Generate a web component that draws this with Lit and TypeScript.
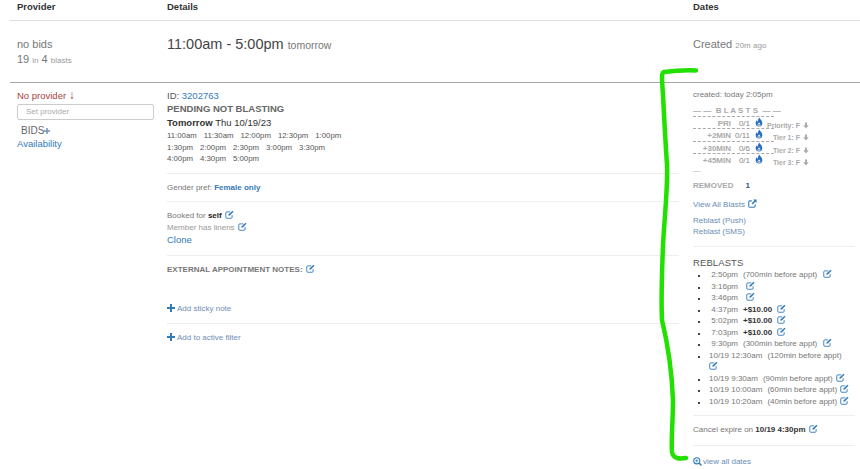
import { LitElement, html, css, svg } from "lit";
import { customElement } from "lit/decorators.js";

const edit = html`<svg class="ic" viewBox="0 0 12 12" width="9" height="9" fill="none" stroke="#337ab7"><path d="M9.5 6.8V9.6a1.4 1.4 0 0 1-1.4 1.4H2.4A1.4 1.4 0 0 1 1 9.6V3.9a1.4 1.4 0 0 1 1.4-1.4H7" stroke-width="1.2"/><path d="M4.6 7.7l.4-1.9L10 .9l1.3 1.3L6.5 7.3z" fill="#337ab7" stroke="none"/></svg>`;
const ext = html`<svg class="ic" viewBox="0 0 12 12" width="9" height="9" fill="none" stroke="#337ab7"><path d="M9.5 7v2.6A1.4 1.4 0 0 1 8.1 11H2.4A1.4 1.4 0 0 1 1 9.6V3.9a1.4 1.4 0 0 1 1.4-1.4H5" stroke-width="1.4"/><path d="M7 .8h4.4v4.4L9.800 3.700 6.300 7.200 4.900 5.800l3.500-3.500z" fill="#337ab7" stroke="none"/></svg>`;
const flame = html`<svg class="fl" viewBox="0 0 10 12" width="8" height="10"><path d="M5.400.4c.4 1.900 3.800 3.600 3.800 7A4.200 4.200 0 0 1 5 11.600 4.200 4.200 0 0 1 .8 7.400c0-1.500.7-2.700 1.500-3.500.1 1 .5 1.600 1.100 1.900C3.400 3.800 4.200 1.800 5.400.4z" fill="#2a6fc0"/><path d="M5 6.200c.3 1 1.800 1.700 1.800 3.100a1.800 1.800 0 0 1-3.600 0c0-1.300 1.500-1.900 1.800-3.100z" fill="#fff"/><path d="M5 8.300c.2.500.8.800.8 1.300a.8.800 0 0 1-1.600 0c0-.5.6-.8.800-1.300z" fill="#1d3f73"/></svg>`;
const arrowDown = html`<svg class="dn" viewBox="0 0 8 9" width="6" height="7"><path d="M2.700.5h2.600v3.700H7.700L4 8.500.3 4.200h2.400z" fill="#a8adb3"/></svg>`;
const plus = html`<svg class="pl" viewBox="0 0 8 8" width="8" height="8"><path d="M3 0h2v3h3v2H5v3H3V5H0V3h3z" fill="#337ab7"/></svg>`;
const plusLight = html`<svg class="pl2" viewBox="0 0 8 8" width="6" height="6"><path d="M3 0h2v3h3v2H5v3H3V5H0V3h3z" fill="#6f93b8"/></svg>`;

const blasts = [
  ["PRI", "0/1", "Priority: F"],
  ["+2MIN", "0/11", "Tier 1: F"],
  ["+30MIN", "0/6", "Tier 2: F"],
  ["+45MIN", "0/1", "Tier 3: F"],
];
const reblasts: [string, string, boolean][] = [
  ["2:50pm", "(700min before appt)", false],
  ["3:16pm", "", false],
  ["3:46pm", "", false],
  ["4:37pm", "+$10.00", true],
  ["5:02pm", "+$10.00", true],
  ["7:03pm", "+$10.00", true],
  ["9:30pm", "(300min before appt)", false],
];
const reblastsLong = [
  ["10/19 9:30am", "(90min before appt)"],
  ["10/19 10:00am", "(60min before appt)"],
  ["10/19 10:20am", "(40min before appt)"],
];

@customElement("app-root")
export class AppRoot extends LitElement {
  static styles = css`
    :host { display: block; position: relative; width: 860px; height: 469px; overflow: hidden; background: #fff; font-family: "Liberation Sans", Arial, sans-serif; font-size: 9px; color: #666; }
    .row { display: grid; grid-template-columns: 150px 526px 1fr; margin-left: 10px; padding-left: 7px; }
    .head { height: 19px; padding-top: 1px; border-bottom: 1px solid #ddd; font-size: 9.500px; font-weight: bold; color: #333; line-height: 11px; }
    .summary { height: 61px; border-bottom: 1px solid #a6a6a6; }
    .summary > div { padding-top: 17px; }
    .big { font-size: 11px; line-height: 13px; color: #777; }
    .sub { font-size: 11px; line-height: 17px; color: #777; display: block; }
    .sub small { font-size: 8px; color: #999; }
    .time { font-size: 14.500px; line-height: 13px; color: #444; }
    .time small { font-size: 10.500px; color: #777; }
    .created { font-size: 11px; line-height: 13px; color: #777; }
    .created small { font-size: 8px; color: #999; }
    a { color: #337ab7; text-decoration: none; }
    .ic { vertical-align: -1px; margin-left: 1px; }
    .p1 { padding-top: 6px; }
    .noprov { font-size: 9.500px; line-height: 13px; height: 13px; color: #a94442; }
    .noprov span { font-size: 12px; line-height: 0; }
    .sel { margin-top: 2px; box-sizing: border-box; width: 137px; height: 16px; border: 1px solid #ccc; border-radius: 2px; padding-left: 8px; font-size: 8px; line-height: 14px; color: #aaa; }
    .bids { margin: 4px 0 0 4px; font-size: 10px; line-height: 13px; color: #666; display: flex; align-items: center; }
    .avail { font-size: 9.500px; line-height: 14px; display: block; }
    .d1 { width: 512px; padding-top: 6px; }
    .id { font-size: 9.500px; line-height: 13px; color: #555; }
    .pend { font-size: 9.500px; font-weight: bold; line-height: 14px; color: #666; }
    .tom { font-size: 9.500px; line-height: 13px; color: #333; }
    .tom b { font-weight: bold; }
    .times { font-size: 7.800px; line-height: 11.500px; color: #555; margin-top: 1px; }
    .times div { display: flex; gap: 7px; }
    .sec { border-top: 1px solid #eee; }
    .s1 { margin-top: 8px; padding-top: 8px; font-size: 8px; line-height: 11px; color: #777; height: 28px; box-sizing: border-box; }
    .s1 b { color: #337ab7; }
    .s2 { padding-top: 8px; height: 54px; box-sizing: border-box; font-size: 8px; line-height: 12px; color: #777; }
    .s2 b { color: #222; }
    .s2 .m { color: #999; }
    .s2 .clone { display: block; font-size: 9.500px; line-height: 13px; margin-top: -1px; }
    .s3 { padding-top: 8px; height: 48px; box-sizing: border-box; font-size: 8px; font-weight: bold; line-height: 11px; color: #777; }
    .add { display: flex; align-items: center; gap: 2px; font-size: 8px; line-height: 11px; color: #6f8db5; }
    .s4 { height: 11px; padding-bottom: 9px; }
    .s5 { padding-top: 8px; }
    .d2 { padding-top: 6px; font-size: 8px; line-height: 11px; width: 162px; }
    .cr { color: #777; }
    .bh { color: #aaa; font-weight: bold; margin-top: 5px; white-space: pre; }
    .br { display: flex; height: 12.300px; line-height: 13px; position: relative; }
    .bc { width: 81px; box-sizing: border-box; border-top: 1px dashed #aaa; display: flex; height: 12.300px; }
    .bl { width: 38px; text-align: right; color: #aaa; font-weight: bold; }
    .bn { width: 22px; text-align: right; padding-right: 3px; box-sizing: border-box; color: #888; }
    .bf { flex: 1; padding-left: 2px; }
    .fl { vertical-align: -1px; }
    .bs { position: absolute; left: 70px; width: 46px; top: 3px; text-align: right; color: #aaa; font-size: 7px; font-weight: bold; white-space: nowrap; }
    .dn { vertical-align: -1px; margin-left: 1px; }
    .dash { color: #bbb; line-height: 10px; height: 7px; margin-top: 1px; }
    .rem { color: #aaa; font-weight: bold; margin-top: 7px; display: flex; gap: 12px; }
    .rem span { color: #2b5a86; }
    .lnk { color: #6a8db5; display: block; }
    .va { margin-top: 8px; }
    .rp { margin-top: 5px; }
    .hr { border-top: 1px solid #eee; }
    .hr1 { margin-top: 9px; }
    .rh { font-size: 9.500px; line-height: 13px; color: #555; margin-top: 9px; letter-spacing: 0.100px; }
    ul { list-style: square; margin: 0; padding: 0 0 0 15px; }
    li { line-height: 11.500px; color: #777; white-space: nowrap; }
    li::marker { font-size: 6px; color: #444; }
    li b { color: #333; }
    .t { display: inline-block; width: 30px; text-align: right; margin-right: 5px; }
    .t2 { margin: 0 5px 0 1px; }
    .wrap { white-space: normal; width: 138px; }
    .gap { margin-left: 2px; }
    .hr2 { margin-top: 8px; }
    .cancel { color: #777; margin-top: 8px; line-height: 12px; padding-bottom: 9px; }
    .cancel b { color: #333; }
    .vd { display: flex; align-items: center; gap: 1px; color: #6a8db5; margin-top: 10px; }
    .green { position: absolute; left: 0; top: 0; pointer-events: none; }
  `;

  render() {
    return html`
      <div class="row head"><div>Provider</div><div>Details</div><div>Dates</div></div>
      <div class="row summary">
        <div><div class="big">no bids</div><span class="sub">19 <small>in</small> 4 <small>blasts</small></span></div>
        <div><div class="time">11:00am - 5:00pm <small>tomorrow</small></div></div>
        <div><div class="created">Created <small>20m ago</small></div></div>
      </div>
      <div class="row">
        <div class="p1">
          <div class="noprov">No provider <span>↓</span></div>
          <div class="sel">Set provider</div>
          <div class="bids">BIDS${plusLight}</div>
          <a class="avail">Availability</a>
        </div>
        <div class="d1">
          <div class="id">ID: <a>3202763</a></div>
          <div class="pend">PENDING NOT BLASTING</div>
          <div class="tom"><b>Tomorrow</b> Thu 10/19/23</div>
          <div class="times">
            <div><span>11:00am</span><span>11:30am</span><span>12:00pm</span><span>12:30pm</span><span>1:00pm</span></div>
            <div><span>1:30pm</span><span>2:00pm</span><span>2:30pm</span><span>3:00pm</span><span>3:30pm</span></div>
            <div><span>4:00pm</span><span>4:30pm</span><span>5:00pm</span></div>
          </div>
          <div class="sec s1">Gender pref: <b>Female only</b></div>
          <div class="sec s2">
            Booked for <b>self</b> ${edit}<br />
            <span class="m">Member has linens</span> ${edit}
            <a class="clone">Clone</a>
          </div>
          <div class="sec s3">EXTERNAL APPOINTMENT NOTES: ${edit}</div>
          <div class="add s4">${plus}<span>Add sticky note</span></div>
          <div class="sec add s5">${plus}<span>Add to active filter</span></div>
        </div>
        <div class="d2">
          <div class="cr">created: today 2:05pm</div>
          <div class="bh">— —  B L A S T S  — —</div>
          ${blasts.map(
            (b) => html`<div class="br">
              <div class="bc"><span class="bl">${b[0]}</span><span class="bn">${b[1]}</span><span class="bf">${flame}</span></div>
              <span class="bs">${b[2]} ${arrowDown}</span>
            </div>`
          )}
          <div class="dash">—</div>
          <div class="rem">REMOVED <span>1</span></div>
          <a class="lnk va">View All Blasts ${ext}</a>
          <a class="lnk rp">Reblast (Push)</a>
          <a class="lnk">Reblast (SMS)</a>
          <div class="hr hr1"></div>
          <div class="rh">REBLASTS</div>
          <ul>
            ${reblasts.map(
              (r) => html`<li><span class="t">${r[0]}</span>${r[2] ? html`<b>${r[1]}</b>` : r[1]} <span class=${r[1] ? "gap" : ""}>${edit}</span></li>`
            )}
            <li class="wrap"><span class="t2">10/19 12:30am</span>(120min before appt) ${edit}</li>
            ${reblastsLong.map((r) => html`<li><span class="t2">${r[0]}</span>${r[1]} ${edit}</li>`)}
          </ul>
          <div class="hr hr2"></div>
          <div class="cancel">Cancel expire on <b>10/19 4:30pm</b> ${edit}</div>
          <div class="hr"></div>
          <div class="vd">
            <svg viewBox="0 0 10 10" width="9" height="9" fill="none" stroke="#337ab7"><circle cx="4.200" cy="4.200" r="3.400" stroke-width="1.200"/><path d="M6.700 6.700l2.700 2.700" stroke-width="1.700"/><path d="M2.500 4.200h3.400M4.200 2.500v3.400" stroke-width=".9"/></svg>
            <span>view all dates</span>
          </div>
        </div>
      </div>
      <svg class="green" width="860" height="469" fill="none">
        ${svg`<path d="M696 70.500 C685 70 672 71 664 72 C661 73 662 80 663 95 C664 115 665 135 667 165 C668 185 665 210 663 245 C662 270 661 300 662 320 C668 345 672 375 673 400 C673 420 671 440 672 452 C673 459 680 459 686 458" stroke="#22e000" stroke-width="4.500" stroke-linecap="round" stroke-linejoin="round"/>`}
      </svg>
    `;
  }
}
